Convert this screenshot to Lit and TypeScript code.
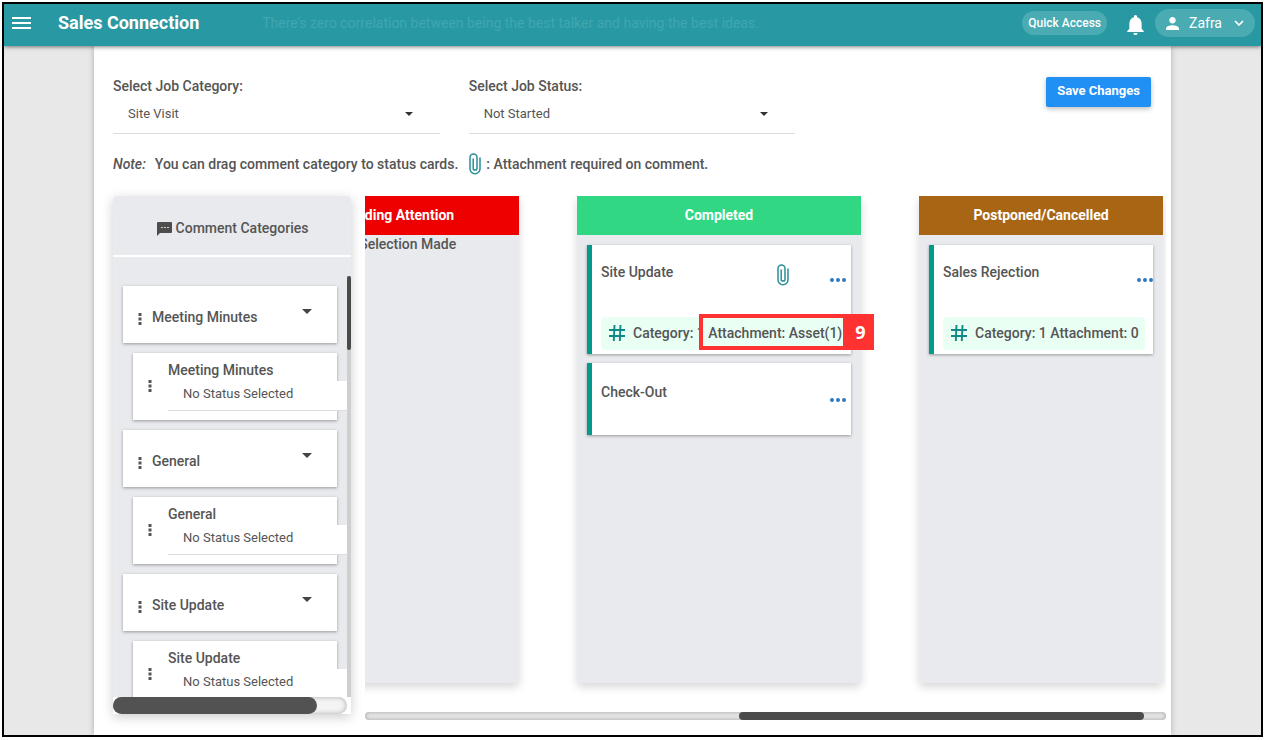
import { LitElement, html, css, svg, nothing } from "lit";
import { customElement, property } from "lit/decorators.js";

interface Job {
  title: string;
  clip?: boolean;
  tag?: string;
  callout?: string;
}

interface Status {
  name: string;
  tone: string;
  wide?: boolean;
  jobs: Job[];
}

const categories = ["Meeting Minutes", "General", "Site Update"];

const statuses: Status[] = [
  { name: "Needing Attention", tone: "red", jobs: [] },
  {
    name: "Completed",
    tone: "green",
    wide: true,
    jobs: [
      { title: "Site Update", clip: true, tag: "Category: 1 Attachment: Asset(1)", callout: "9" },
      { title: "Check-Out" },
    ],
  },
  {
    name: "Postponed/Cancelled",
    tone: "brown",
    jobs: [{ title: "Sales Rejection", tag: "Category: 1 Attachment: 0" }],
  },
];

const clipIcon = svg`<svg class="clip" viewBox="0 0 12 22" width="12" height="22" aria-hidden="true">
  <path d="M11 4.500v11.300a5 5 0 0 1-10 0V4.400a3.500 3.500 0 0 1 7 0v10.800a1.900 1.900 0 0 1-3.800 0V5.500" fill="none" stroke="#2a8f96" stroke-width="1.500"/></svg>`;

const hashIcon = svg`<svg viewBox="0 0 16 16" width="16" height="16" aria-hidden="true">
  <path d="M5.500 0L4.800 16M11.500 0L10.800 16M0 5h16M0 11h16" stroke="#0d8a86" stroke-width="1.900" fill="none"/></svg>`;

const gripIcon = svg`<svg viewBox="0 0 4 12" width="4" height="12" aria-hidden="true">
  <path d="M.5 0h3v3h-3zM.5 4.500h3v3h-3zM.5 9h3v3h-3z" fill="#555"/></svg>`;

const base = css`
  * { box-sizing: border-box; }
  button, select { font: inherit; color: inherit; border: 0; margin: 0; padding: 0; background: none; border-radius: 0; }
  button { cursor: pointer; }
  svg { display: block; flex: none; }
`;

@customElement("status-column")
export class StatusColumn extends LitElement {
  @property({ attribute: false }) status!: Status;

  static styles = [base, css`
    :host { display: block; flex: none; background: #e9eaee; border-radius: 4px; box-shadow: 0 4px 10px rgba(0, 0, 0, .16); }
    h2 { margin: 0; height: 39px; padding-bottom: 2px; display: flex; align-items: center; justify-content: center; color: #fff; font-size: 14px; font-weight: 700; }
    .red { background: #ef0000; }
    .green { background: #31d782; }
    .brown { background: #a86615; }
    .column { width: 244px; }
    .wide { width: 284px; }
    .empty { margin: 0; text-align: center; line-height: 18px; }
    .cards { display: flex; flex-direction: column; gap: 9px; padding: 10px; }
    .card { background: #fff; border-left: 5px solid #009b8b; box-shadow: 0 1px 3px rgba(0, 0, 0, .35); padding: 0 8px 4px 9px; }
    .top { display: flex; height: 72px; align-items: flex-start; margin-right: -8px; }
    .top h3 { flex: 1; margin: 0; padding-top: 18px; font-size: 14px; line-height: 18px; font-weight: 500; }
    .clip { margin: 19px 41px 0 0; }
    .plain { padding-top: 2px; }
    .plain .top { height: 66px; }
    .more { display: flex; padding-top: 33px; }
    .wide .more { padding-right: 5px; }
    .tag { position: relative; display: flex; align-items: center; gap: 8px; height: 33px; padding: 0 0 2px 8px; background: #eafff4; border-radius: 4px; white-space: nowrap; }
    .callout { position: absolute; left: 98px; top: -3px; width: 175px; height: 36px; display: flex; pointer-events: none; }
    .outline { flex: 1; border: 4px solid #ff3232; }
    .number { width: 27px; background: #ff3232; color: #fff; font: 700 18px/36px "Open Sans", sans-serif; text-align: center; }
  `];

  render() {
    const s = this.status;
    return html`<section class="column ${s.wide ? "wide" : ""}">
      <h2 class=${s.tone}>${s.name}</h2>
      ${s.jobs.length
        ? html`<div class="cards">${s.jobs.map((j) => this.card(j))}</div>`
        : html`<p class="empty">No Selection Made</p>`}
    </section>`;
  }

  card(j: Job) {
    return html`<article class="card ${j.tag ? "" : "plain"}">
      <div class="top">
        <h3>${j.title}</h3>
        ${j.clip ? clipIcon : nothing}
        <button class="more" aria-label="More options">
          <svg viewBox="0 0 16 4" width="16" height="4"><g fill="#3079bd"><circle cx="2" cy="2" r="2"/><circle cx="8" cy="2" r="2"/><circle cx="14" cy="2" r="2"/></g></svg>
        </button>
      </div>
      ${j.tag
        ? html`<div class="tag">${hashIcon}<span>${j.tag}</span>
            ${j.callout ? html`<div class="callout"><div class="outline"></div><div class="number">${j.callout}</div></div>` : nothing}
          </div>`
        : nothing}
    </article>`;
  }
}

@customElement("category-list")
export class CategoryList extends LitElement {
  static styles = [base, css`
    :host { display: flex; flex-direction: column; min-height: 0; background: #e9eaee; border-radius: 4px; box-shadow: 0 3px 12px rgba(0, 0, 0, .2); }
    h2 { margin: 0; flex: none; height: 61px; padding: 4px 0 0 1px; border-bottom: 2px solid #fff; display: flex; align-items: center; justify-content: center; gap: 4px; font-size: 14px; font-weight: 500; }
    h2 svg { margin-top: 2px; }
    .area { flex: 1; min-height: 0; display: flex; margin-top: 19px; }
    .items { flex: 1; min-width: 0; overflow: hidden; padding: 10px 0 0 10px; display: flex; flex-direction: column; gap: 10px; }
    .group, .entry { flex: none; margin-right: 10px; background: #fff; box-shadow: 0 1px 3px rgba(0, 0, 0, .35); display: flex; }
    .group { height: 57px; padding: 5px 25px 0 15px; align-items: center; gap: 10px; }
    .group svg { margin-top: 3px; }
    .group h3 { flex: 1; }
    h3 { margin: 0; font-size: 14px; line-height: 18px; font-weight: 500; }
    .toggle { align-self: flex-start; padding-top: 15px; }
    .entry { height: 67px; margin-left: 10px; padding: 8px 0 0 15px; gap: 16px; }
    .entry > svg { margin-top: 19px; }
    .field { flex: 1; margin-right: -10px; }
    .field select { appearance: none; display: block; width: 100%; height: 30px; margin-top: 2px; padding: 0 0 3px 15px; background: #fff; border-bottom: 1px solid #ddd; font-size: 13px; font-weight: 400; }
    .vbar { width: 4px; background: #cfcfcf; }
    .vthumb { height: 74px; background: #4a4a4a; border-radius: 2px; }
    .hbar { flex: none; background: #fff; padding-right: 4px; }
    .htrack { height: 17px; border-radius: 9px; background: #f3f3f3; box-shadow: inset 0 0 5px rgba(0, 0, 0, .3); }
    .hthumb { width: 87%; height: 100%; border-radius: 9px; background: #525252; }
  `];

  render() {
    return html`
      <h2>
        <svg viewBox="0 0 15 14" width="15" height="14" aria-hidden="true"><path d="M1 0h13a1 1 0 0 1 1 1v9a1 1 0 0 1-1 1H3L0 14V1a1 1 0 0 1 1-1z" fill="#4d4d4d"/><path d="M4 5.500h2M7 5.500h2M10 5.500h2" stroke="#ccc" stroke-width="1"/></svg>
        Comment Categories
      </h2>
      <div class="area">
        <div class="items">
          ${categories.map((c, i) => html`
            <div class="group">
              ${gripIcon}<h3>${c}</h3>
              <button class="toggle" aria-label="Toggle ${c}">
                <svg viewBox="0 0 10 5" width="10" height="5"><path d="M0 0h10L5 5z" fill="#444"/></svg>
              </button>
            </div>
            <div class="entry">
              ${gripIcon}
              <div class="field">
                <h3><label for="status-${i}">${c}</label></h3>
                <select id="status-${i}"><option>No Status Selected</option></select>
              </div>
            </div>`)}
        </div>
        <div class="vbar"><div class="vthumb"></div></div>
      </div>
      <div class="hbar"><div class="htrack"><div class="hthumb"></div></div></div>
    `;
  }
}

@customElement("app-root")
export class AppRoot extends LitElement {
  static styles = [base, css`
    :host { display: block; box-sizing: border-box; height: 100vh; padding: 2px 2px 3px; background: #fff; font: 500 14px/18px Roboto, sans-serif; color: #555; }
    .frame { height: 100%; border: 2px solid #000; background: #e8e8e8; display: flex; flex-direction: column; overflow: hidden; }
    header { position: relative; flex: none; height: 42px; display: flex; align-items: center; padding: 0 6px 4px 8px; background: #2899a3; color: #fff; box-shadow: 0 1px 4px rgba(0, 0, 0, .5); }
    h1 { margin: 0 63px 0 27px; font-size: 18px; font-weight: 700; line-height: 24px; }
    .motto { flex: 1; margin: 0; color: #40a6af; font-weight: 400; }
    .quick { height: 24px; padding: 0 6px; border-radius: 12px; background: #4aabb3; font-size: 12px; line-height: 22px; margin-right: 20px; }
    .bell { margin: 4px 11px 0 0; }
    .user { display: flex; align-items: center; height: 28px; padding: 0 11px; border-radius: 14px; background: #4aabb3; font-size: 14px; font-weight: 400; }
    .user svg:first-child { margin-right: 10px; }
    .user svg:last-child { margin-left: 12px; }
    main { flex: 1; min-height: 0; margin: 0 90px; padding: 31px 5px 15px 19px; background: #fff; box-shadow: 0 0 6px rgba(0, 0, 0, .25); display: flex; flex-direction: column; }
    .controls { display: grid; grid-template-columns: 1fr 1fr 1fr; column-gap: 29px; margin-right: 15px; }
    .control label { display: block; }
    .box { display: flex; align-items: center; border-bottom: 1px solid #ddd; height: 39px; }
    .box select { appearance: none; flex: 1; height: 100%; padding: 0 0 1px 15px; font-size: 13px; font-weight: 400; }
    .box svg { margin: 0 27px 1px -35px; pointer-events: none; }
    .save { justify-self: end; height: 30px; padding: 0 11px 2px; border-radius: 2px; background: #2090f5; color: #fff; font-size: 13px; font-weight: 700; box-shadow: 0 2px 5px rgba(0, 0, 0, .26); }
    .note { display: flex; align-items: center; height: 22px; margin: 19px 0 21px; }
    .note em { margin-right: 9px; }
    .note .clip { margin: 0 5px 0 11px; }
    .work { flex: 1; min-height: 0; display: grid; grid-template-columns: 238px minmax(0, 1fr); column-gap: 14px; }
    category-list { margin-bottom: 6px; }
    .board { min-width: 0; min-height: 0; display: flex; flex-direction: column; }
    .columns { flex: 1; min-height: 0; overflow: hidden; display: flex; justify-content: flex-end; gap: 58px; padding: 0 3px 29px 0; }
    .track { height: 8px; flex: none; border-radius: 4px; background: #e6e6e6; box-shadow: inset 0 0 4px rgba(0, 0, 0, .3); display: flex; justify-content: flex-end; padding-right: 22px; }
    .thumb { width: 52%; border-radius: 4px; background: #4b4b4b; }
  `];

  picker(id: string, label: string, value: string) {
    return html`<div class="control">
      <label for=${id}>${label}</label>
      <div class="box">
        <select id=${id}><option>${value}</option></select>
        <svg viewBox="0 0 8 4" width="8" height="4" aria-hidden="true"><path d="M0 0h8L4 4z" fill="#333"/></svg>
      </div>
    </div>`;
  }

  render() {
    return html`<div class="frame">
      <header>
        <button aria-label="Menu"><svg viewBox="0 0 19 12" width="19" height="12"><path d="M0 1h19M0 6h19M0 11h19" stroke="#fff" stroke-width="2"/></svg></button>
        <h1>Sales Connection</h1>
        <p class="motto">There’s zero correlation between being the best talker and having the best ideas.</p>
        <button class="quick">Quick Access</button>
        <button class="bell" aria-label="Notifications"><svg viewBox="4 2.500 16 19.500" width="17" height="20"><path d="M12 22c1.100 0 2-.9 2-2h-4c0 1.100.9 2 2 2zm6-6v-5c0-3.070-1.630-5.640-4.500-6.320V4c0-.83-.67-1.500-1.500-1.500s-1.500.67-1.500 1.500v.68C7.640 5.360 6 7.920 6 11v5l-2 2v1h16v-1l-2-2z" fill="#fff"/></svg></button>
        <button class="user">
          <svg viewBox="4 4 16 16" width="13" height="13"><path d="M12 12c2.210 0 4-1.790 4-4s-1.790-4-4-4-4 1.790-4 4 1.790 4 4 4zm0 2c-2.670 0-8 1.340-8 4v2h16v-2c0-2.660-5.330-4-8-4z" fill="#fff"/></svg>
          Zafra
          <svg viewBox="0 0 10 6" width="10" height="6"><path d="M1 1l4 4 4-4" stroke="#fff" stroke-width="1.700" fill="none"/></svg>
        </button>
      </header>
      <main>
        <div class="controls">
          ${this.picker("category", "Select Job Category:", "Site Visit")}
          ${this.picker("status", "Select Job Status:", "Not Started")}
          <button class="save">Save Changes</button>
        </div>
        <p class="note"><em>Note:</em> You can drag comment category to status cards. ${clipIcon} : Attachment required on comment.</p>
        <div class="work">
          <category-list></category-list>
          <section class="board">
            <div class="columns">${statuses.map((s) => html`<status-column .status=${s}></status-column>`)}</div>
            <div class="track"><div class="thumb"></div></div>
          </section>
        </div>
      </main>
    </div>`;
  }
}
